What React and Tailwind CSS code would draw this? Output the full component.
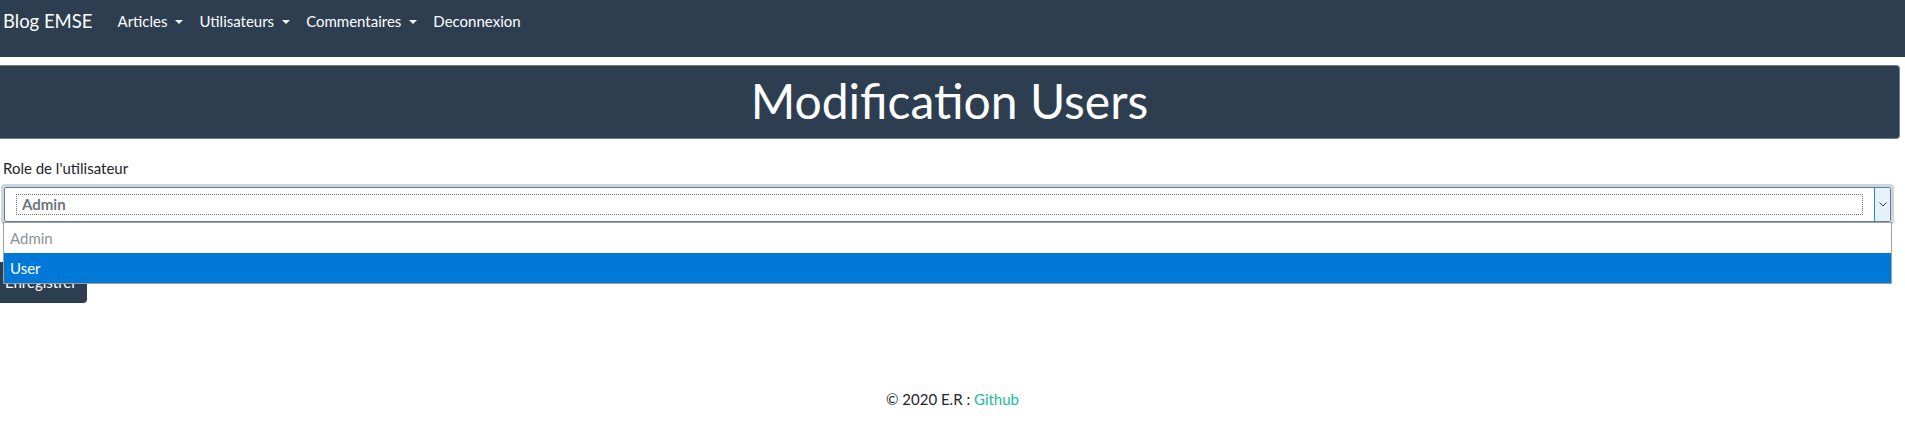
import React from 'react';

const Caret = () => (
  <span className="ml-[8px] inline-block align-middle w-0 h-0 border-t-[4px] border-t-white border-x-[4px] border-x-transparent" />
);

export default function App() {
  const links = [
    { label: 'Articles', dropdown: true },
    { label: 'Utilisateurs', dropdown: true },
    { label: 'Commentaires', dropdown: true },
    { label: 'Deconnexion', dropdown: false },
  ];

  return (
    <div className="min-h-[426px] bg-white text-[#212529] font-['Lato','Open_Sans',sans-serif] text-[15px]">
      {/* Navbar */}
      <nav className="h-[57px] bg-[#2c3e50] flex items-center pl-[3px] pb-[14px]">
        <a className="text-white text-[18.5px] leading-none mr-[17px]">Blog EMSE</a>
        <ul className="flex items-center">
          {links.map((l) => (
            <li key={l.label} className="px-[8px] text-white text-[15px] leading-none flex items-center">
              {l.label}
              {l.dropdown && <Caret />}
            </li>
          ))}
        </ul>
      </nav>

      {/* Jumbotron */}
      <div className="mt-[8px] mr-[5px] h-[74px] bg-[#2c3e50] border border-l-0 border-[#6f7f8e] rounded-r-[4px] flex items-center justify-center">
        <h1 className="text-white text-[48px] leading-none font-normal pb-[2px]">Modification Users</h1>
      </div>

      {/* Form */}
      <div className="pt-[20px]">
        <label className="block pl-[3px] text-[15px] leading-[18px] text-[#212529]">Role de l'utilisateur</label>

        <div className="relative mt-[7px] ml-[1px] mr-[11px]">
          {/* select with focus ring */}
          <div className="rounded-[4px] border-[3px] border-[#d0d5da]">
            <div className="h-[35px] border border-[#5b7d9e] rounded-[2px] bg-white flex items-stretch">
              <div className="flex-1 flex items-center pl-[11px] pr-[11px]">
                <div className="flex-1 h-[21px] border border-dotted border-[#6e7680] flex items-center pl-[5px]">
                  <span className="font-bold text-[#6b7580] text-[15px] leading-none">Admin</span>
                </div>
              </div>
              <div className="w-[16px] bg-[#e5f1fb] border-l border-[#3c7fb1] flex items-center justify-center">
                <svg width="8" height="5" viewBox="0 0 8 5" fill="none">
                  <path d="M0.5 0.5 L4 4 L7.5 0.5" stroke="#3a3a3a" strokeWidth="1" />
                </svg>
              </div>
            </div>
          </div>

          {/* open option list */}
          <div className="absolute left-[2px] right-[2px] top-[38px] z-10 bg-white border border-[#a0a0a0]">
            <div className="h-[30px] flex items-center pl-[6px] text-[15px] text-[#8a939c]">Admin</div>
            <div className="h-[30px] flex items-center pl-[6px] text-[15px] text-white bg-[#0078d7]">User</div>
          </div>

          <div className="mt-[37px]">
            <button className="h-[41px] pl-[11px] pr-[10px] -ml-[7px] bg-[#2c3e50] text-white text-[15px] rounded-[4px]">
              Enregistrer
            </button>
          </div>
        </div>
      </div>

      {/* Footer */}
      <footer className="mt-[85px] text-center text-[15px] text-[#212529]">
        © 2020 E.R : <a className="text-[#18bc9c]">Github</a>
      </footer>
    </div>
  );
}
